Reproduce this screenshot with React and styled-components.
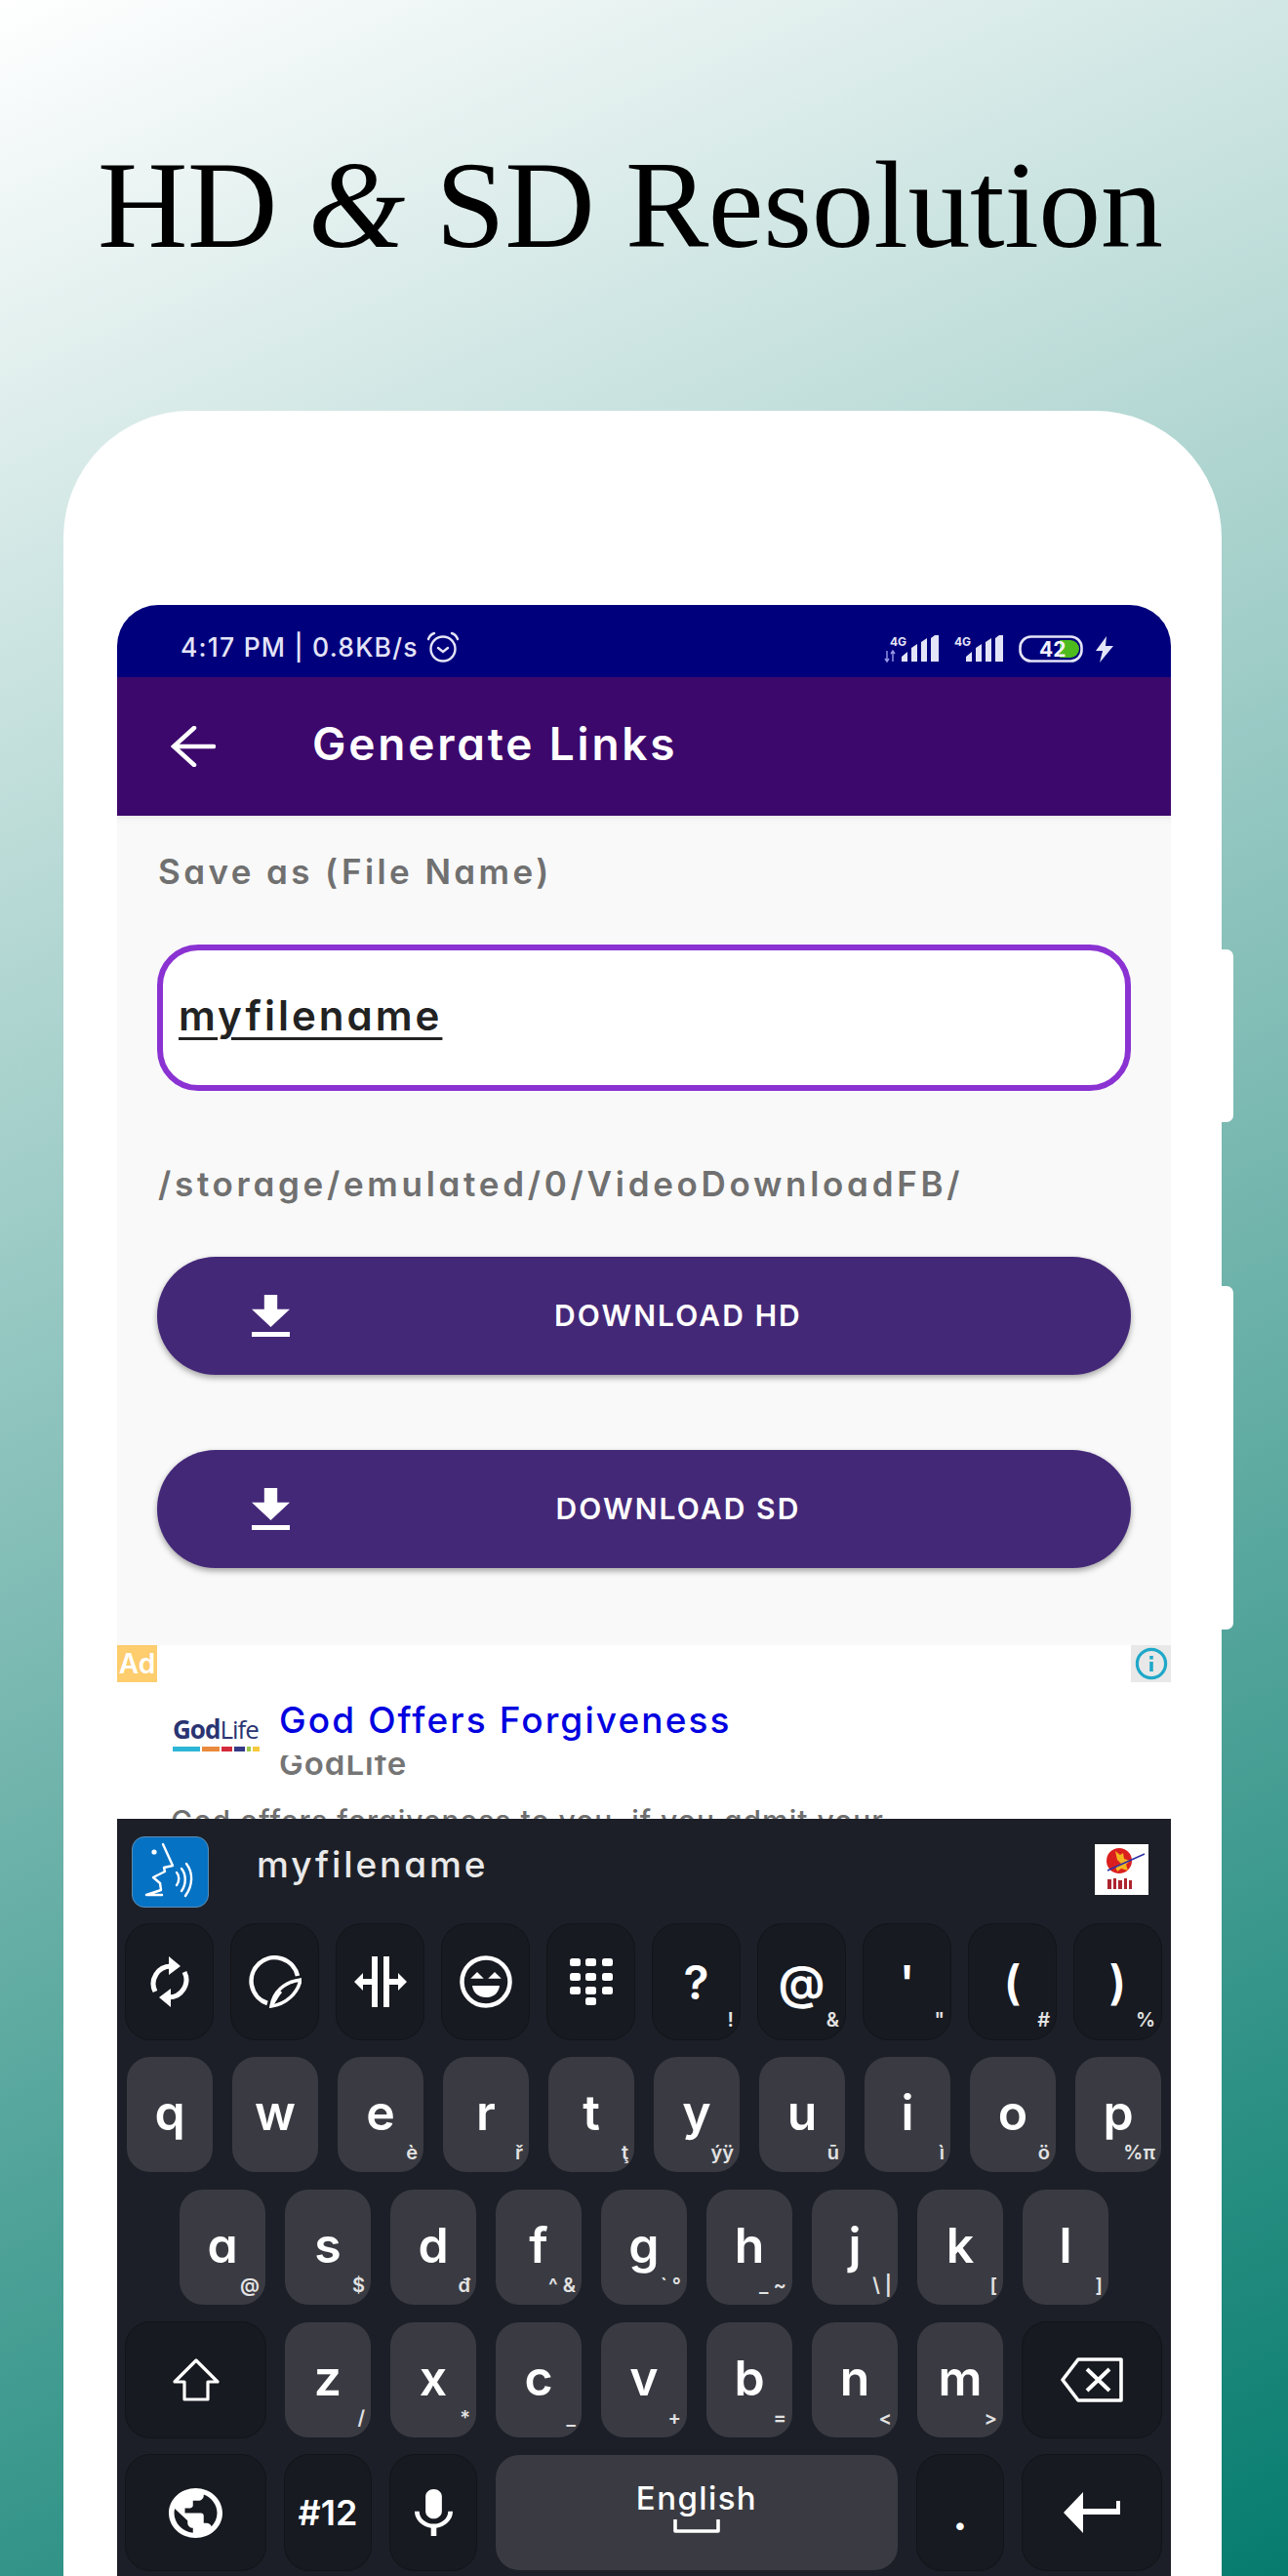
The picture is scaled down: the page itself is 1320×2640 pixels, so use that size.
import React from 'react';
import styled, { createGlobalStyle } from 'styled-components';

const Global = createGlobalStyle`
  html, body { margin: 0; padding: 0; }
  body { font-family: Inter, "Noto Sans", sans-serif; }
  * { box-sizing: border-box; }
`;
const UI = `font-family: Inter, "Noto Sans", sans-serif; font-feature-settings: "cv11" 1, "ss03" 0;`;

const Page = styled.div`
  width: 1320px; height: 2640px; overflow: hidden;
  background: linear-gradient(156deg, #ffffff 0%, #067c6e 100%);
`;
const TitleBar = styled.header`height: 421px; padding: 145px 0 0 100px;`;
const Title = styled.h1`
  margin: 0; font: 400 128px/130px "Liberation Serif", serif; color: #000;
  white-space: nowrap; letter-spacing: -0.4px;
  i { font-weight: 400; }
`;
const Phone = styled.div`
  position: relative; margin-left: 65px; width: 1187px; height: 2219px;
  background: #fff; border-radius: 130px 130px 0 0; padding: 199px 0 0 55px;
`;
const SideButton = styled.span`
  position: absolute; left: 1187px; top: ${p => p.$top}px; width: 12px; height: ${p => p.$h}px;
  background: #fff; border-radius: 0 7px 7px 0;
`;
const Screen = styled.div`
  width: 1080px; height: 2020px; border-radius: 42px 42px 0 0; overflow: hidden;
  display: flex; flex-direction: column; background: #fff;
`;
const StatusBar = styled.div`
  height: 74px; background: #00007c; display: flex; align-items: center;
  padding: 12px 58px 0 65px; color: #e4e4f8; ${UI}
`;
const StatusText = styled.span`font-size: 26.5px; font-weight: 500; letter-spacing: 1.2px; white-space: nowrap;`;
const StatusRight = styled.div`margin-left: auto; display: flex; align-items: center; padding-top: 4px;`;
const Toolbar = styled.div`
  height: 142px; background: #3c086c; display: flex; align-items: center; padding-left: 55px;
`;
const ToolbarTitle = styled.h2`
  margin: -6px 0 0 99px; ${UI} font-size: 46px; font-weight: 600; color: #fff; letter-spacing: 2.8px; white-space: nowrap;
`;
const Form = styled.section`
  height: 850px; background: #f9f9f9; padding: 32px 41px 0 41px; display: flex; flex-direction: column;
  box-shadow: inset 0 8px 8px -8px rgba(0,0,0,.12);
`;
const Label = styled.div`
  ${UI} font-size: 35px; line-height: 50px; font-weight: 600; color: #707070; letter-spacing: 3.4px; white-space: nowrap; padding-left: 1px;
`;
const InputBox = styled.div`
  margin-top: 50px; height: 150px; border: 6px solid #8a32d2; border-radius: 42px; background: #fff;
  display: flex; align-items: center; padding-left: 16px;
`;
const InputText = styled.span`
  ${UI} font-size: 42px; font-weight: 600; color: #222; text-decoration: underline; text-underline-offset: 7px;
  text-decoration-thickness: 3px; letter-spacing: 3px; margin-top: -5px;
`;
const PathText = styled(Label)`margin-top: 70px; letter-spacing: 3.7px;`;
const DownloadButton = styled.div`
  margin-top: ${p => p.$top}px; height: 121px; border-radius: 60px; background: #442878; color: #fff;
  box-shadow: 0 3px 6px rgba(0,0,0,.35); display: flex; align-items: center; padding-left: 97px;
`;
const DownloadText = styled.span`
  ${UI} flex: 1; text-align: center; font-size: 30px; font-weight: 600; letter-spacing: 2.1px; padding-right: 66px; margin-top: -2px;
`;
const AdArea = styled.section`
  position: relative; height: 178px; background: #fff; overflow: hidden; flex: none;
`;
const AdBadge = styled.span`
  position: absolute; left: 0; top: 0; width: 41px; height: 38px; background: #fdcd6e; color: #fff;
  ${UI} font-size: 28px; font-weight: 600; display: flex; align-items: center; justify-content: center;
`;
const InfoBadge = styled.span`
  position: absolute; right: 0; top: 0; width: 41px; height: 38px; background: #e8e8e8;
  display: flex; align-items: center; justify-content: center;
`;
const AdRow = styled.div`display: flex; padding: 50px 0 0 57px;`;
const GodLogo = styled.div`width: 93px; margin-top: 21px; flex: none;`;
const LogoWord = styled.div`
  font-family: "Open Sans", sans-serif; font-size: 26px; line-height: 30px; color: #2a3472; letter-spacing: -1px; white-space: nowrap;
  b { font-weight: 700; } span { font-weight: 400; }
`;
const LogoBars = styled.div`display: flex; gap: 2px; height: 5px; margin-top: 3px;`;
const LogoBar = styled.i`display: block; height: 5px; width: ${p => p.$w}px; background: ${p => p.$c};`;
const AdBody = styled.div`margin-left: 16px;`;
const AdHead = styled.div`
  ${UI} font-size: 37px; line-height: 54px; font-weight: 500; color: #0000e0; letter-spacing: 2.1px; white-space: nowrap;
`;
const AdBrandClip = styled.div`height: 22px; overflow: hidden; margin-top: 9px;`;
const AdBrand = styled.div`
  ${UI} font-size: 33px; line-height: 28px; margin-top: -6px; font-weight: 600; color: #757575; letter-spacing: 1px;
`;
const AdDesc = styled.div`
  position: absolute; left: 55px; top: 160px; ${UI} font-size: 30px; line-height: 40px; font-weight: 500; color: #6e6e6e; white-space: nowrap; letter-spacing: 1px;
`;

const Keyboard = styled.section`flex: 1; background: #1c1f27; display: flex; flex-direction: column; ${UI}`;
const Suggest = styled.div`height: 107px; display: flex; align-items: center; padding: 0 23px 0 15px; flex: none;`;
const VoiceIcon = styled.div`
  width: 79px; height: 73px; border-radius: 13px; background: #0672c4; border: 1.5px solid #5d8cb0;
  display: flex; align-items: center; justify-content: center; margin-top: 1px;
`;
const SuggestText = styled.span`
  margin-left: 49px; font-size: 37px; font-weight: 500; color: #e9e9e9; letter-spacing: 2.9px; margin-top: -15px;
`;
const BrandBox = styled.div`
  margin-left: auto; width: 55px; height: 52px; background: #fff; display: flex; align-items: center; justify-content: center; margin-top: -4px;
`;
const Rows = styled.div`display: flex; flex-direction: column; gap: 16px;`;
const Row = styled.div`
  height: 120px; display: flex; align-items: center; gap: ${p => p.$gap}px; padding-left: ${p => p.$left}px;
`;
const FnKey = styled.div`
  position: relative; width: ${p => p.$w || 90}px; height: 120px; background: #171a20; border: 1.5px solid #121419;
  border-radius: 26px; color: #fff; display: flex; align-items: center; justify-content: center; flex: none;
  margin-left: ${p => p.$ml || 0}px; font-size: ${p => p.$fs || 48}px; font-weight: 600;
`;
const LetterKey = styled.div`
  position: relative; width: ${p => p.$w || 88}px; height: 118px; background: #3a3b42;
  border-radius: 24px; color: #fff; display: flex; align-items: center; justify-content: center; flex: none;
  margin-left: ${p => p.$ml || 0}px; font-size: 50px; font-weight: 600; padding-bottom: 4px;
`;
const SubLabel = styled.span`
  position: absolute; right: 6px; bottom: 9px; font-size: 20px; line-height: 22px; font-weight: 600; color: #e2e2e2; white-space: nowrap;
`;
const SpaceLabel = styled.div`
  display: flex; flex-direction: column; align-items: center; font-size: 33px; font-weight: 500; line-height: 42px; margin-top: -12px; letter-spacing: 1.4px;
`;

const Arrow = () => (
  <svg width="46" height="42" viewBox="0 0 46 42" fill="none" stroke="#fff" strokeWidth="4.5" strokeLinecap="round">
    <path d="M3 21H44M24 2 3 21 24 40" />
  </svg>
);
const Alarm = () => (
  <svg width="34" height="33" viewBox="0 0 34 33" fill="none" stroke="#e4e4f8" strokeWidth="2.4" strokeLinecap="round" style={{ marginLeft: 8 }}>
    <circle cx="17" cy="18" r="12.5" />
    <path d="M12 17l5 4 5-4M2 8c1-3 3-5 6-6M32 8c-1-3-3-5-6-6" />
  </svg>
);
const Signal = ({ arrows }) => (
  <svg width={arrows ? 56 : 50} height="28" viewBox={arrows ? '0 0 56 28' : '6 0 50 28'} fill="#e4e4f8" style={{ marginRight: 16 }}>
    <text x="6" y="11" fontSize="12" fontWeight="700" fontFamily="Inter, sans-serif">4G</text>
    {arrows && <path d="M3 16v10M1 24l2 3 2-3M9 27V17M7 19l2-3 2 3" stroke="#9a9ae8" strokeWidth="1.4" fill="none" />}
    <path d="M18 27v-5l6-5v10zM28 27V13l6-4v18zM38 27V7l6-4v24zM48 27V3l4-3h4v27z" />
  </svg>
);
const Battery = () => (
  <svg width="67" height="28" viewBox="0 0 67 28" style={{ marginRight: 11 }}>
    <rect x="1.5" y="1.5" width="63" height="25" rx="11" fill="none" stroke="#e4e4f8" strokeWidth="2.6" />
    <path d="M42 5h11a9 9 0 0 1 0 18H42z" fill="#4dbb1e" />
    <text x="21" y="22" fontSize="21" fontWeight="700" fill="#f2f2ff" fontFamily="Inter, sans-serif">42</text>
  </svg>
);
const Bolt = () => (
  <svg width="20" height="27" viewBox="0 0 20 27" fill="#e4e4f8"><path d="M12 0 1 15h7l-3 12L19 10h-8z" /></svg>
);
const DownloadIcon = () => (
  <svg width="39" height="43" viewBox="5 3 14 17" preserveAspectRatio="none" fill="#fff">
    <path d="M14.4 3H9.6v5.8H5l7 7.2 7-7.2h-4.6zM5 18v2h14v-2z" />
  </svg>
);
const Info = () => (
  <svg width="34" height="34" viewBox="0 0 34 34" fill="none" stroke="#1fa8c9" strokeWidth="3.2">
    <circle cx="17" cy="17" r="14.6" /><path d="M17 15V25M17 9v3.6" strokeWidth="3.6" />
  </svg>
);
const Voice = () => (
  <svg width="54" height="62" viewBox="0 0 54 62" fill="none" stroke="#fff" strokeWidth="2.4" strokeLinecap="round" strokeLinejoin="round">
    <circle cx="10" cy="11" r="2.6" fill="#fff" stroke="none" />
    <path d="M19 3 29 25 20 27 21 31 9 37 16 43 17 50 2 55H18" />
    <path d="M33 32c3 3 3 9 0 13M38 28c5 6 5 16 0 23M43 23c7 9 7 22 -1 33" />
  </svg>
);
const BrandMark = () => (
  <svg width="48" height="46" viewBox="0 0 48 46">
    <circle cx="21" cy="14" r="13" fill="#db1f1f" />
    <path d="M17 4l5 4 3-2 1 6 6 2-4 4 2 6-7-2-4 3-2-5 6-3-4-4z" fill="#f3b51f" />
    <path d="M9 24 47 7" stroke="#2b2fa6" strokeWidth="1.4" />
    <path d="M9 33h4v10H9zM15 32h3v11h-3zM20 34h4v9h-4zM26 32h3v11h-3zM31 34h3v9h-3z" fill="#ad2530" />
  </svg>
);
const SyncIcon = () => (
  <svg width="44" height="54" viewBox="0 0 44 54" fill="none" stroke="#fff" strokeWidth="5">
    <path d="M7 37A18 18 0 0 1 23 11M37 17A18 18 0 0 1 21 43" />
    <path d="M21 1 33 11 21 20zM23 34 11 43 23 53z" fill="#fff" stroke="none" />
  </svg>
);
const StickerIcon = () => (
  <svg width="54" height="54" viewBox="0 0 54 54" fill="none" stroke="#fff" strokeWidth="4.5">
    <path d="M19 49A24 24 0 1 1 50 21" />
    <path d="M23 52C25 38 36 27 53 25 50 39 38 50 23 52z" strokeWidth="3.5" />
    <path d="M23 52C27 46 30 40 33 37" strokeWidth="3" />
  </svg>
);
const SplitIcon = () => (
  <svg width="54" height="52" viewBox="0 0 54 52" fill="#fff">
    <path d="M18 0h6v52h-6zM30 0h6v52h-6zM0 26l9-9v6h9v6H9v6zM54 26l-9-9v6h-9v6h9v6z" />
  </svg>
);
const EmojiIcon = () => (
  <svg width="54" height="54" viewBox="0 0 54 54" fill="none" stroke="#fff" strokeWidth="4.5">
    <circle cx="27" cy="27" r="24.5" />
    <path d="M13 23l5-5 5 5zM31 23l5-5 5 5z" fill="#fff" strokeWidth="1.5" />
    <path d="M13 31h28c-1 8-7 12-14 12s-13-4-14-12z" fill="#fff" stroke="none" />
  </svg>
);
const DialIcon = () => (
  <svg width="44" height="48" viewBox="0 0 44 48" fill="#fff">
    {[0, 15, 29].flatMap(y => [0, 16, 33].map(x => <rect key={`${x}-${y}`} x={x} y={y} width="11" height="8" rx="2.5" />))}
    <rect x="16" y="40" width="11" height="8" rx="2.5" />
  </svg>
);
const ShiftIcon = () => (
  <svg width="48" height="44" viewBox="0 0 48 44" fill="none" stroke="#fff" strokeWidth="3.2" strokeLinejoin="round">
    <path d="M24 2 46 24H36V42H12V24H2z" />
  </svg>
);
const GlobeIcon = () => (
  <svg width="55" height="51" viewBox="2 2 20 20" preserveAspectRatio="none" fill="#fff">
    <path d="M12 2C6.48 2 2 6.48 2 12s4.48 10 10 10 10-4.48 10-10S17.52 2 12 2zm-1 17.93c-3.95-.49-7-3.85-7-7.93 0-.62.08-1.21.21-1.79L9 15v1c0 1.1.9 2 2 2v1.93zm6.9-2.54c-.26-.81-1-1.39-1.9-1.39h-1v-3c0-.55-.45-1-1-1H8v-2h2c.55 0 1-.45 1-1V7h2c1.1 0 2-.9 2-2v-.41c2.93 1.19 5 4.06 5 7.41 0 2.08-.8 3.97-2.1 5.39z" />
  </svg>
);
const MicIcon = () => (
  <svg width="39" height="48" viewBox="5 2 14 19" preserveAspectRatio="none" fill="#fff">
    <path d="M12 14c1.66 0 3-1.34 3-3V5c0-1.66-1.34-3-3-3S9 3.34 9 5v6c0 1.66 1.34 3 3 3zm5.3-3c0 3-2.54 5.1-5.3 5.1S6.7 14 6.7 11H5c0 3.41 2.72 6.23 6 6.72V21h2v-3.28c3.28-.48 6-3.3 6-6.72h-1.7z" />
  </svg>
);
const BackspaceIcon = () => (
  <svg width="64" height="46" viewBox="0 0 64 46" fill="none" stroke="#fff" strokeWidth="3.6" strokeLinejoin="round">
    <path d="M18 2H62V44H18L2 23z" />
    <path d="M27 12 50 34M50 12 27 34" strokeWidth="4" />
  </svg>
);
const EnterIcon = () => (
  <svg width="58" height="42" viewBox="0 0 58 42" fill="#fff">
    <path d="M0 21 20 0V17H54V9H58V23H20V42z" />
  </svg>
);
const SpaceIcon = () => (
  <svg width="48" height="15" viewBox="0 0 48 15" fill="none" stroke="#fff" strokeWidth="3.6" strokeLinejoin="round">
    <path d="M2 1V13H46V1" />
  </svg>
);

const topSymbols = [['?', '!'], ['@', '&'], ["'", '"'], ['(', '#'], [')', '%']];
const row1 = [['q'], ['w'], ['e', 'è'], ['r', 'ř'], ['t', 'ţ'], ['y', 'ýÿ'], ['u', 'ū'], ['i', 'ì'], ['o', 'ö'], ['p', '%π']];
const row2 = [['a', '@'], ['s', '$'], ['d', 'đ'], ['f', '^ &'], ['g', '` °'], ['h', '_ ~'], ['j', '\\ |'], ['k', '['], ['l', ']']];
const row3 = [['z', '/'], ['x', '*'], ['c', '_'], ['v', '+'], ['b', '='], ['n', '<'], ['m', '>']];

const Letter = ({ k }) => (
  <LetterKey>{k[0]}{k[1] && <SubLabel>{k[1]}</SubLabel>}</LetterKey>
);

export default function App() {
  return (
    <Page>
      <Global />
      <TitleBar>
        <Title>HD <i>&amp;</i> SD Resolution</Title>
      </TitleBar>
      <Phone>
        <SideButton $top={552} $h={177} />
        <SideButton $top={897} $h={352} />
        <Screen>
          <StatusBar>
            <StatusText>4:17 PM | 0.8KB/s</StatusText>
            <Alarm />
            <StatusRight>
              <Signal arrows />
              <Signal />
              <Battery />
              <Bolt />
            </StatusRight>
          </StatusBar>
          <Toolbar>
            <Arrow />
            <ToolbarTitle>Generate Links</ToolbarTitle>
          </Toolbar>
          <Form>
            <Label>Save as (File Name)</Label>
            <InputBox><InputText>myfilename</InputText></InputBox>
            <PathText>/storage/emulated/0/VideoDownloadFB/</PathText>
            <DownloadButton $top={50}><DownloadIcon /><DownloadText>DOWNLOAD HD</DownloadText></DownloadButton>
            <DownloadButton $top={77}><DownloadIcon /><DownloadText>DOWNLOAD SD</DownloadText></DownloadButton>
          </Form>
          <AdArea>
            <AdBadge>Ad</AdBadge>
            <InfoBadge><Info /></InfoBadge>
            <AdRow>
              <GodLogo>
                <LogoWord><b>God</b><span>Life</span></LogoWord>
                <LogoBars>
                  <LogoBar $w={28} $c="#2eb6d6" /><LogoBar $w={18} $c="#ea8a3c" /><LogoBar $w={11} $c="#d42a3c" />
                  <LogoBar $w={11} $c="#343a86" /><LogoBar $w={4} $c="#9ec84a" /><LogoBar $w={7} $c="#f7c93c" />
                </LogoBars>
              </GodLogo>
              <AdBody>
                <AdHead>God Offers Forgiveness</AdHead>
                <AdBrandClip><AdBrand>GodLife</AdBrand></AdBrandClip>
              </AdBody>
            </AdRow>
            <AdDesc>God offers forgiveness to you, if you admit your</AdDesc>
          </AdArea>
          <Keyboard>
            <Suggest>
              <VoiceIcon><Voice /></VoiceIcon>
              <SuggestText>myfilename</SuggestText>
              <BrandBox><BrandMark /></BrandBox>
            </Suggest>
            <Rows>
              <Row $gap={17} $left={8}>
                <FnKey $w={91}><SyncIcon /></FnKey>
                <FnKey $w={91}><StickerIcon /></FnKey>
                <FnKey $w={91}><SplitIcon /></FnKey>
                <FnKey $w={91}><EmojiIcon /></FnKey>
                <FnKey $w={91}><DialIcon /></FnKey>
                {topSymbols.map(k => <FnKey $w={91} key={k[0]}>{k[0]}<SubLabel>{k[1]}</SubLabel></FnKey>)}
              </Row>
              <Row $gap={20} $left={10}>{row1.map(k => <Letter key={k[0]} k={k} />)}</Row>
              <Row $gap={20} $left={64}>{row2.map(k => <Letter key={k[0]} k={k} />)}</Row>
              <Row $gap={20} $left={8}>
                <FnKey $w={145}><ShiftIcon /></FnKey>
                <LetterKey $ml={-1}>z<SubLabel>/</SubLabel></LetterKey>
                {row3.slice(1).map(k => <Letter key={k[0]} k={k} />)}
                <FnKey $w={144} $ml={-1}><BackspaceIcon /></FnKey>
              </Row>
              <Row $gap={18} $left={8}>
                <FnKey $w={145}><GlobeIcon /></FnKey>
                <FnKey $fs={36}>#12</FnKey>
                <FnKey><MicIcon /></FnKey>
                <LetterKey $w={412} $ml={1}><SpaceLabel>English<SpaceIcon /></SpaceLabel></LetterKey>
                <FnKey $w={90} $ml={1}>.</FnKey>
                <FnKey $w={144}><EnterIcon /></FnKey>
              </Row>
            </Rows>
          </Keyboard>
        </Screen>
      </Phone>
    </Page>
  );
}
